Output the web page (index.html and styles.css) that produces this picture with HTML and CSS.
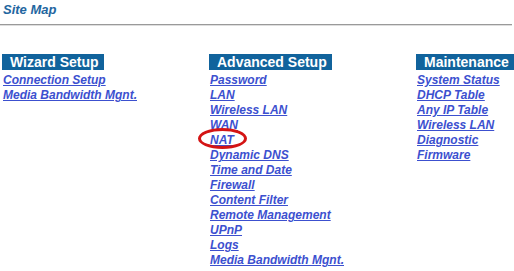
FILE: index.html
```html
<!DOCTYPE HTML>
<html>
	<head>
		<meta http-equiv="Content-Type" content="text/html; charset=UTF-8" />
		<title>Site Map</title>
		<link rel="stylesheet" href="styles.css">
	</head>
	<body>
		<h1 class="title">Site Map</h1>
		<hr class="rule">
		<div class="sitemap">
			<div class="col">
				<div class="col_head">Wizard Setup</div>
				<ul class="links">
					<li><a href="#">Connection Setup</a></li>
					<li><a href="#">Media Bandwidth Mgnt.</a></li>
				</ul>
			</div>
			<div class="col">
				<div class="col_head">Advanced Setup</div>
				<ul class="links">
					<li><a href="#">Password</a></li>
					<li><a href="#">LAN</a></li>
					<li><a href="#">Wireless LAN</a></li>
					<li><a href="#">WAN</a></li>
					<li class="marked"><a href="#">NAT</a><span class="circle"></span></li>
					<li><a href="#">Dynamic DNS</a></li>
					<li><a href="#">Time and Date</a></li>
					<li><a href="#">Firewall</a></li>
					<li><a href="#">Content Filter</a></li>
					<li><a href="#">Remote Management</a></li>
					<li><a href="#">UPnP</a></li>
					<li><a href="#">Logs</a></li>
					<li><a href="#">Media Bandwidth Mgnt.</a></li>
				</ul>
			</div>
			<div class="col col--last">
				<div class="col_head">Maintenance</div>
				<ul class="links">
					<li><a href="#">System Status</a></li>
					<li><a href="#">DHCP Table</a></li>
					<li><a href="#">Any IP Table</a></li>
					<li><a href="#">Wireless LAN</a></li>
					<li><a href="#">Diagnostic</a></li>
					<li><a href="#">Firmware</a></li>
				</ul>
			</div>
		</div>
	</body>
</html>
```

FILE: styles.css
```css
body {
	margin: 0;
	font-family: "Liberation Sans", Arial, sans-serif;
	background: #fff;
}
.title {
	margin: 0;
	padding: 2px 0 0 3px;
	font-size: 13px;
	line-height: 16px;
	font-weight: bold;
	font-style: italic;
	color: #2366a0;
}
.rule {
	height: 0;
	margin: 6px 2px 0 0;
	border: 0;
	border-top: 1px solid #9a9a9a;
	border-bottom: 1px solid #dedede;
}
.sitemap {
	display: flex;
	padding: 27px 0 0 2px;
}
.col {
	flex: 0 0 207px;
}
.col--last {
	flex: 1 1 auto;
}
.col_head {
	display: inline-block;
	padding: 0 5px 0 8px;
	background-color: #11639c;
	color: #fff;
	font-size: 14px;
	line-height: 16px;
	font-weight: bold;
}
.links {
	list-style: none;
	margin: 2px 0 0;
	padding: 0 0 0 1px;
}
.links li {
	font-size: 12px;
	line-height: 15px;
	font-weight: bold;
	font-style: italic;
}
.links a {
	color: #3c50cf;
	text-decoration: underline;
}
.marked {
	position: relative;
}
.circle {
	position: absolute;
	left: -12px;
	top: -5px;
	width: 43px;
	height: 15px;
	border: 3px solid #d41414;
	border-radius: 50%;
}
```
